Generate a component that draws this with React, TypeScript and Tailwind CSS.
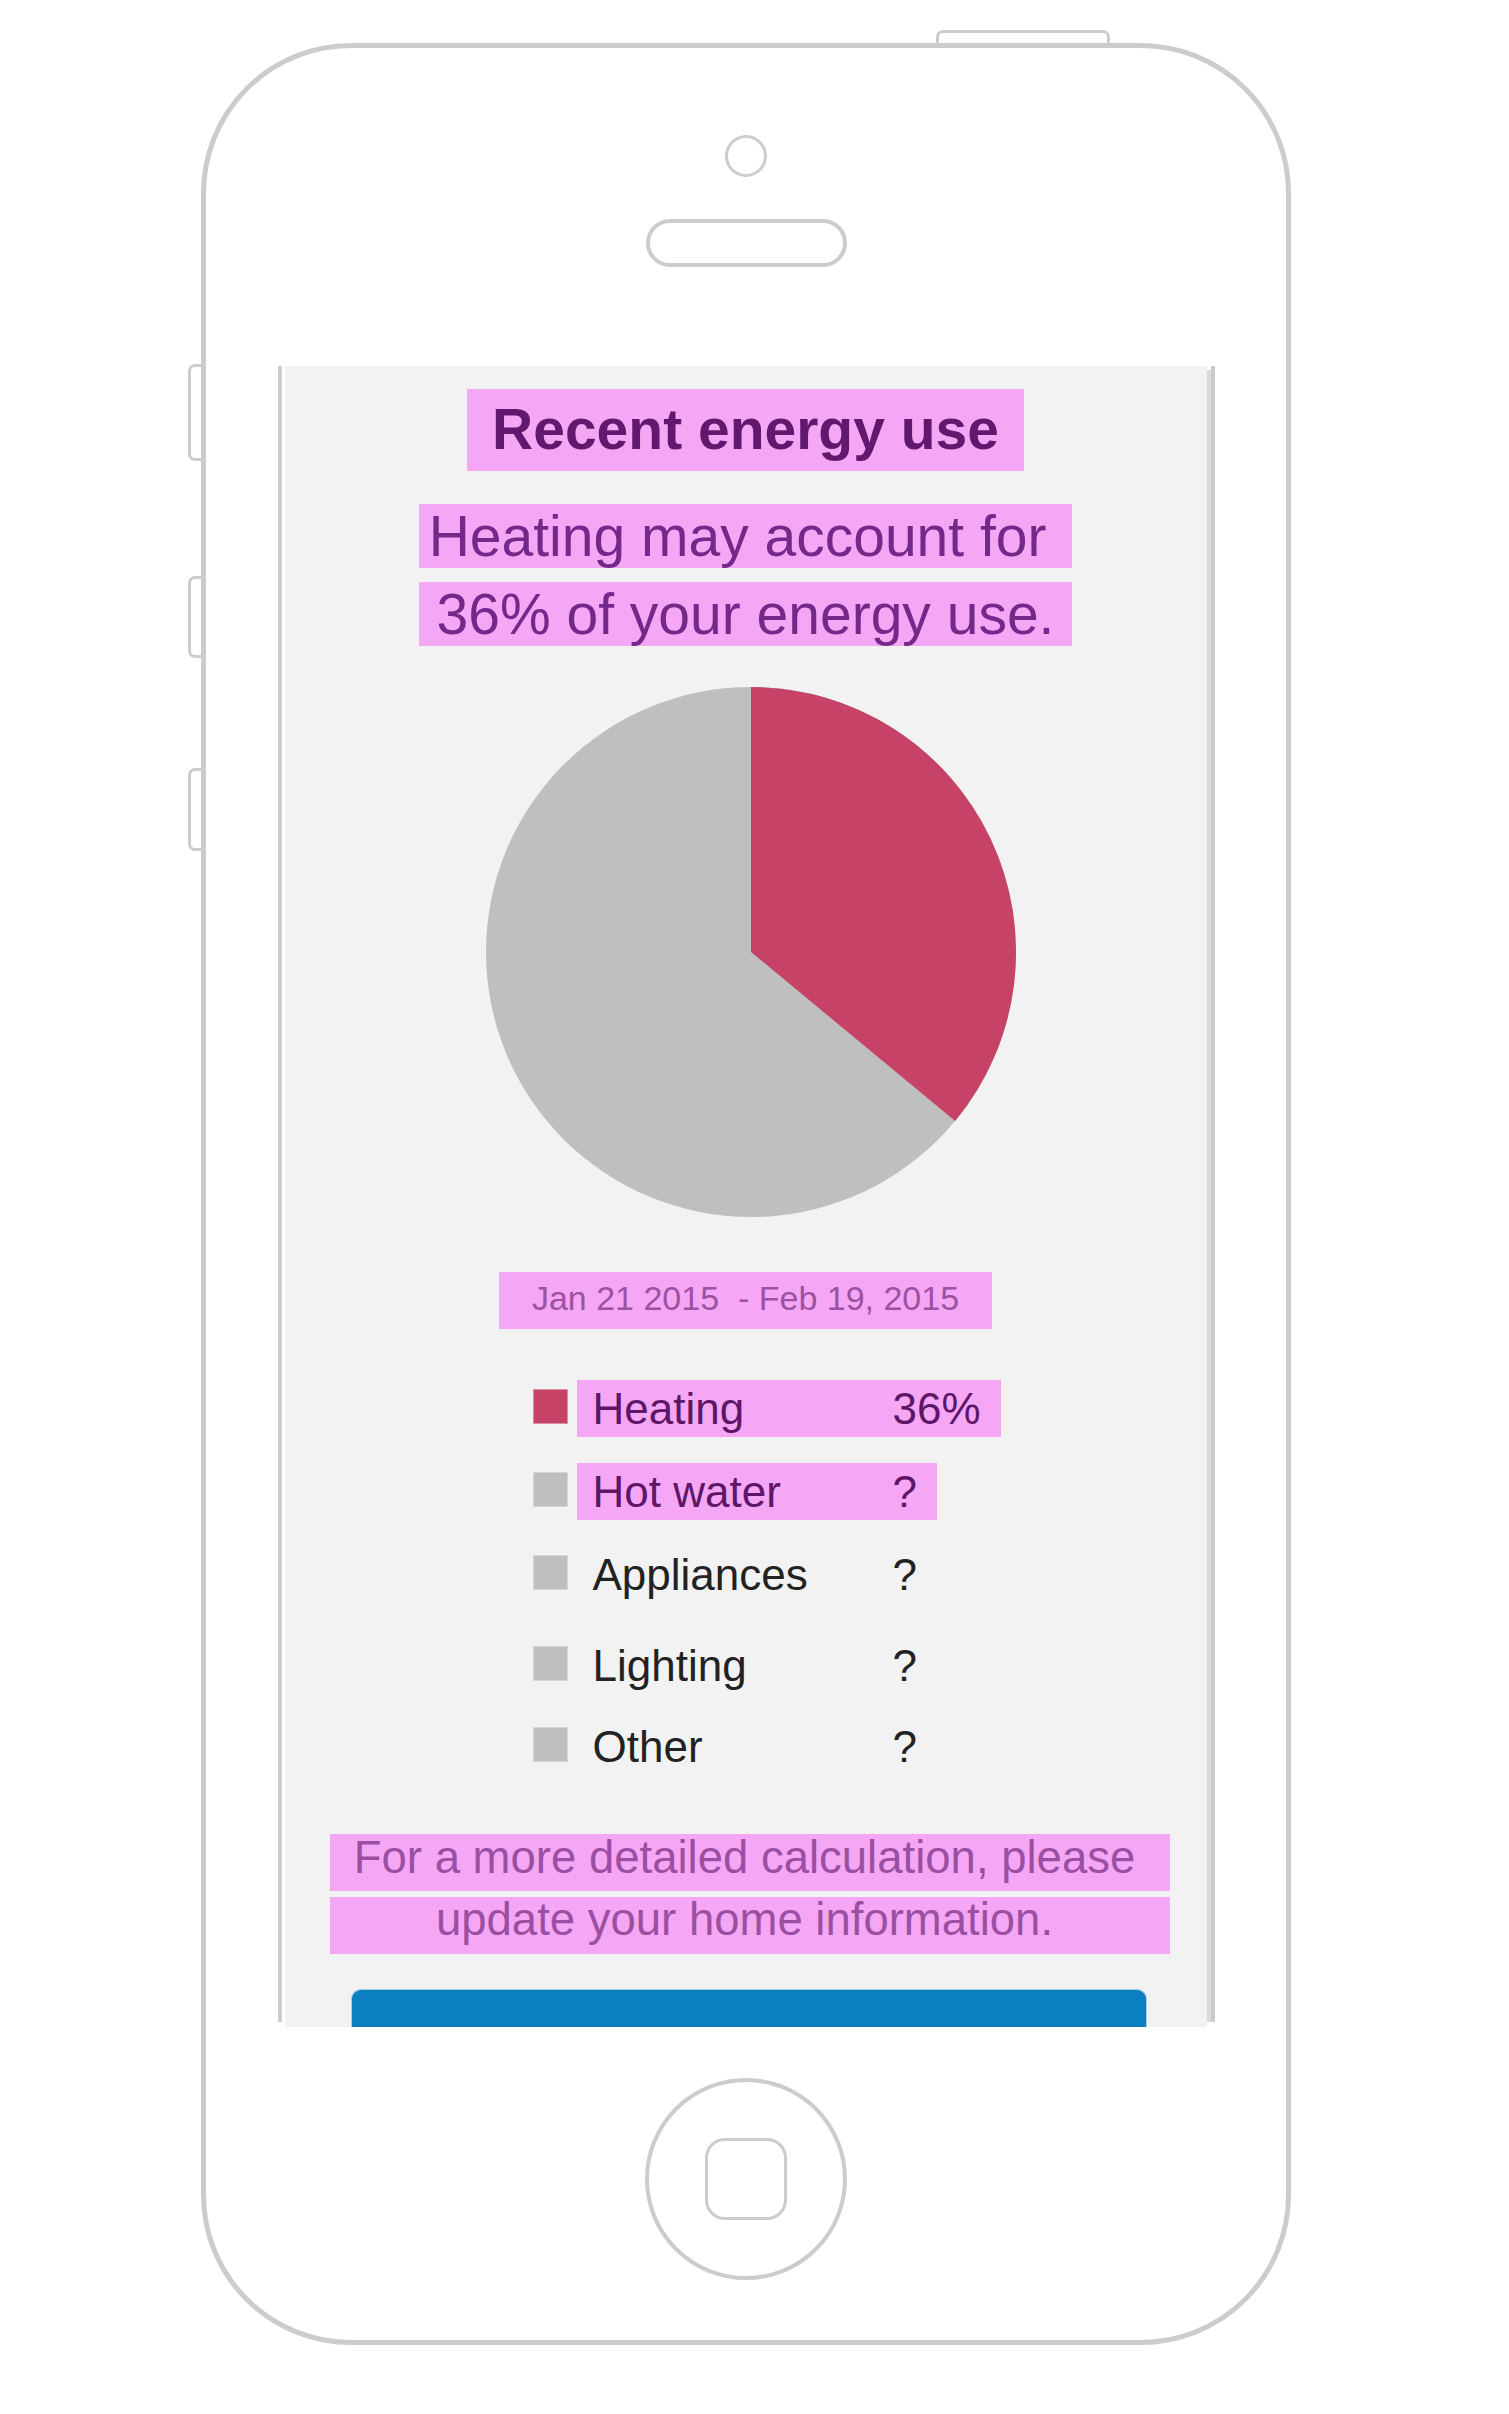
import React from "react";

const Pie = () => (
  <svg width="530" height="530" viewBox="0 0 530 530" className="block">
    <circle cx="265" cy="265" r="265" fill="#bfbfbf" />
    <path d="M265 265 L265 0 A265 265 0 0 1 469.2 433.9 Z" fill="#c64266" />
  </svg>
);

type Row = { label: string; value: string; color: string; hl: boolean; mt: string };

const rows: Row[] = [
  { label: "Heating", value: "36%", color: "red", hl: true, mt: "mt-0" },
  { label: "Hot water", value: "?", color: "gray", hl: true, mt: "mt-[26px]" },
  { label: "Appliances", value: "?", color: "gray", hl: false, mt: "mt-[26px]" },
  { label: "Lighting", value: "?", color: "gray", hl: false, mt: "mt-[34px]" },
  { label: "Other", value: "?", color: "gray", hl: false, mt: "mt-[24px]" },
];

export default function App() {
  return (
    <div className="w-[1509px] h-[2414px] bg-white font-['Liberation_Sans',Arial,sans-serif] pt-[43px] pl-[201px]">
      <div className="relative w-[1090px] h-[2302px] border-[5px] border-[#cccccc] rounded-[150px] bg-white flex flex-col items-center">
        {/* top button */}
        <div className="absolute left-[730px] top-[-18px] w-[174px] h-[18px] border-t-[3px] border-x-[3px] border-[#cccccc] rounded-t-[7px]" />
        {/* side buttons */}
        <div className="absolute left-[-18px] top-[316px] w-[18px] h-[97px] border-l-[3px] border-y-[3px] border-[#cccccc] rounded-l-[7px]" />
        <div className="absolute left-[-18px] top-[528px] w-[18px] h-[82px] border-l-[3px] border-y-[3px] border-[#cccccc] rounded-l-[7px]" />
        <div className="absolute left-[-18px] top-[720px] w-[18px] h-[83px] border-l-[3px] border-y-[3px] border-[#cccccc] rounded-l-[7px]" />

        {/* camera */}
        <div className="shrink-0 mt-[87px] w-[42px] h-[42px] rounded-full border-[3px] border-[#cccccc]" />
        {/* speaker */}
        <div className="shrink-0 mt-[42px] w-[201px] h-[48px] rounded-full border-[4px] border-[#cccccc]" />

        {/* screen */}
        <div className="shrink-0 mt-[99px] w-[937px] h-[1661px] flex flex-row items-start">
          <div className="shrink-0 w-[4px] h-[1656px] bg-[#cccccc]" />
          <div className="shrink-0 w-[3px]" />
          <div className="shrink-0 w-[922px] h-[1661px] bg-[#f2f2f2] overflow-hidden flex flex-col items-center">
            <div className="shrink-0 mt-[23px] w-[557px] h-[82px] bg-[#f5a7f5] text-center text-[57px] font-bold leading-[80px] text-[#62186e]">
              Recent energy use
            </div>
            <div className="shrink-0 mt-[33px] w-[653px] h-[64px] bg-[#f5a7f5] text-center text-[57px] leading-[64px] text-[#74288a] whitespace-pre">
              {"Heating may account for "}
            </div>
            <div className="shrink-0 mt-[14px] w-[653px] h-[64px] bg-[#f5a7f5] text-center text-[57px] leading-[64px] text-[#74288a] whitespace-pre">
              36% of your energy use.
            </div>
            <div className="shrink-0 mt-[41px] ml-[10px]">
              <Pie />
            </div>
            <div className="shrink-0 mt-[55px] w-[493px] h-[57px] bg-[#f5a7f5] text-center text-[34px] leading-[53px] text-[#9b52a3] whitespace-pre">
              {"Jan 21 2015  - Feb 19, 2015"}
            </div>

            <div className="shrink-0 mt-[51px] self-start ml-[248px] flex flex-col">
              {rows.map((r) => (
                <div key={r.label} className={`${r.mt} shrink-0 flex flex-row items-start h-[57px]`}>
                  <div
                    className={
                      r.color === "red"
                        ? "shrink-0 mt-[9px] w-[35px] h-[35px] bg-[#c64266] border border-[#dc8ea2]"
                        : "shrink-0 mt-[9px] w-[35px] h-[35px] bg-[#bfbfbf] border border-[#d6d6d6]"
                    }
                  />
                  <div
                    className={
                      r.hl
                        ? "ml-[9px] h-[57px] bg-[#f5a7f5] pl-[16px] pr-[20px] flex flex-row text-[44px] leading-[58px] text-[#5e1668]"
                        : "ml-[9px] h-[57px] pl-[16px] pr-[20px] flex flex-row text-[44px] leading-[58px] text-[#222222]"
                    }
                  >
                    <span className="w-[300px]">{r.label}</span>
                    <span>{r.value}</span>
                  </div>
                </div>
              ))}
            </div>

            <div className="shrink-0 mt-[59px] ml-[8px] w-[840px] h-[57px] bg-[#f5a7f5] text-center pr-[10px] text-[45.5px] leading-[47px] text-[#9b4fa3]">
              For a more detailed calculation, please
            </div>
            <div className="shrink-0 mt-[6px] ml-[8px] w-[840px] h-[57px] bg-[#f5a7f5] text-center pr-[10px] text-[45.5px] leading-[45px] text-[#9b4fa3]">
              update your home information.
            </div>

            <div className="shrink-0 mt-[35px] self-start ml-[66px] w-[796px] h-[60px] bg-[#0c7fc1] rounded-t-[10px] border-t border-x border-[#a9cde4]" />
          </div>
          <div className="shrink-0 flex flex-row">
            <div className="mt-[4px] w-[4px] h-[1652px] bg-[#dadada]" />
            <div className="w-[4px] h-[1656px] bg-[#cacaca]" />
          </div>
        </div>

        {/* home button */}
        <div className="shrink-0 mt-[51px] w-[202px] h-[202px] rounded-full border-[4px] border-[#cccccc] flex items-center justify-center">
          <div className="w-[82px] h-[82px] rounded-[20px] border-[3px] border-[#cccccc]" />
        </div>
      </div>
    </div>
  );
}
